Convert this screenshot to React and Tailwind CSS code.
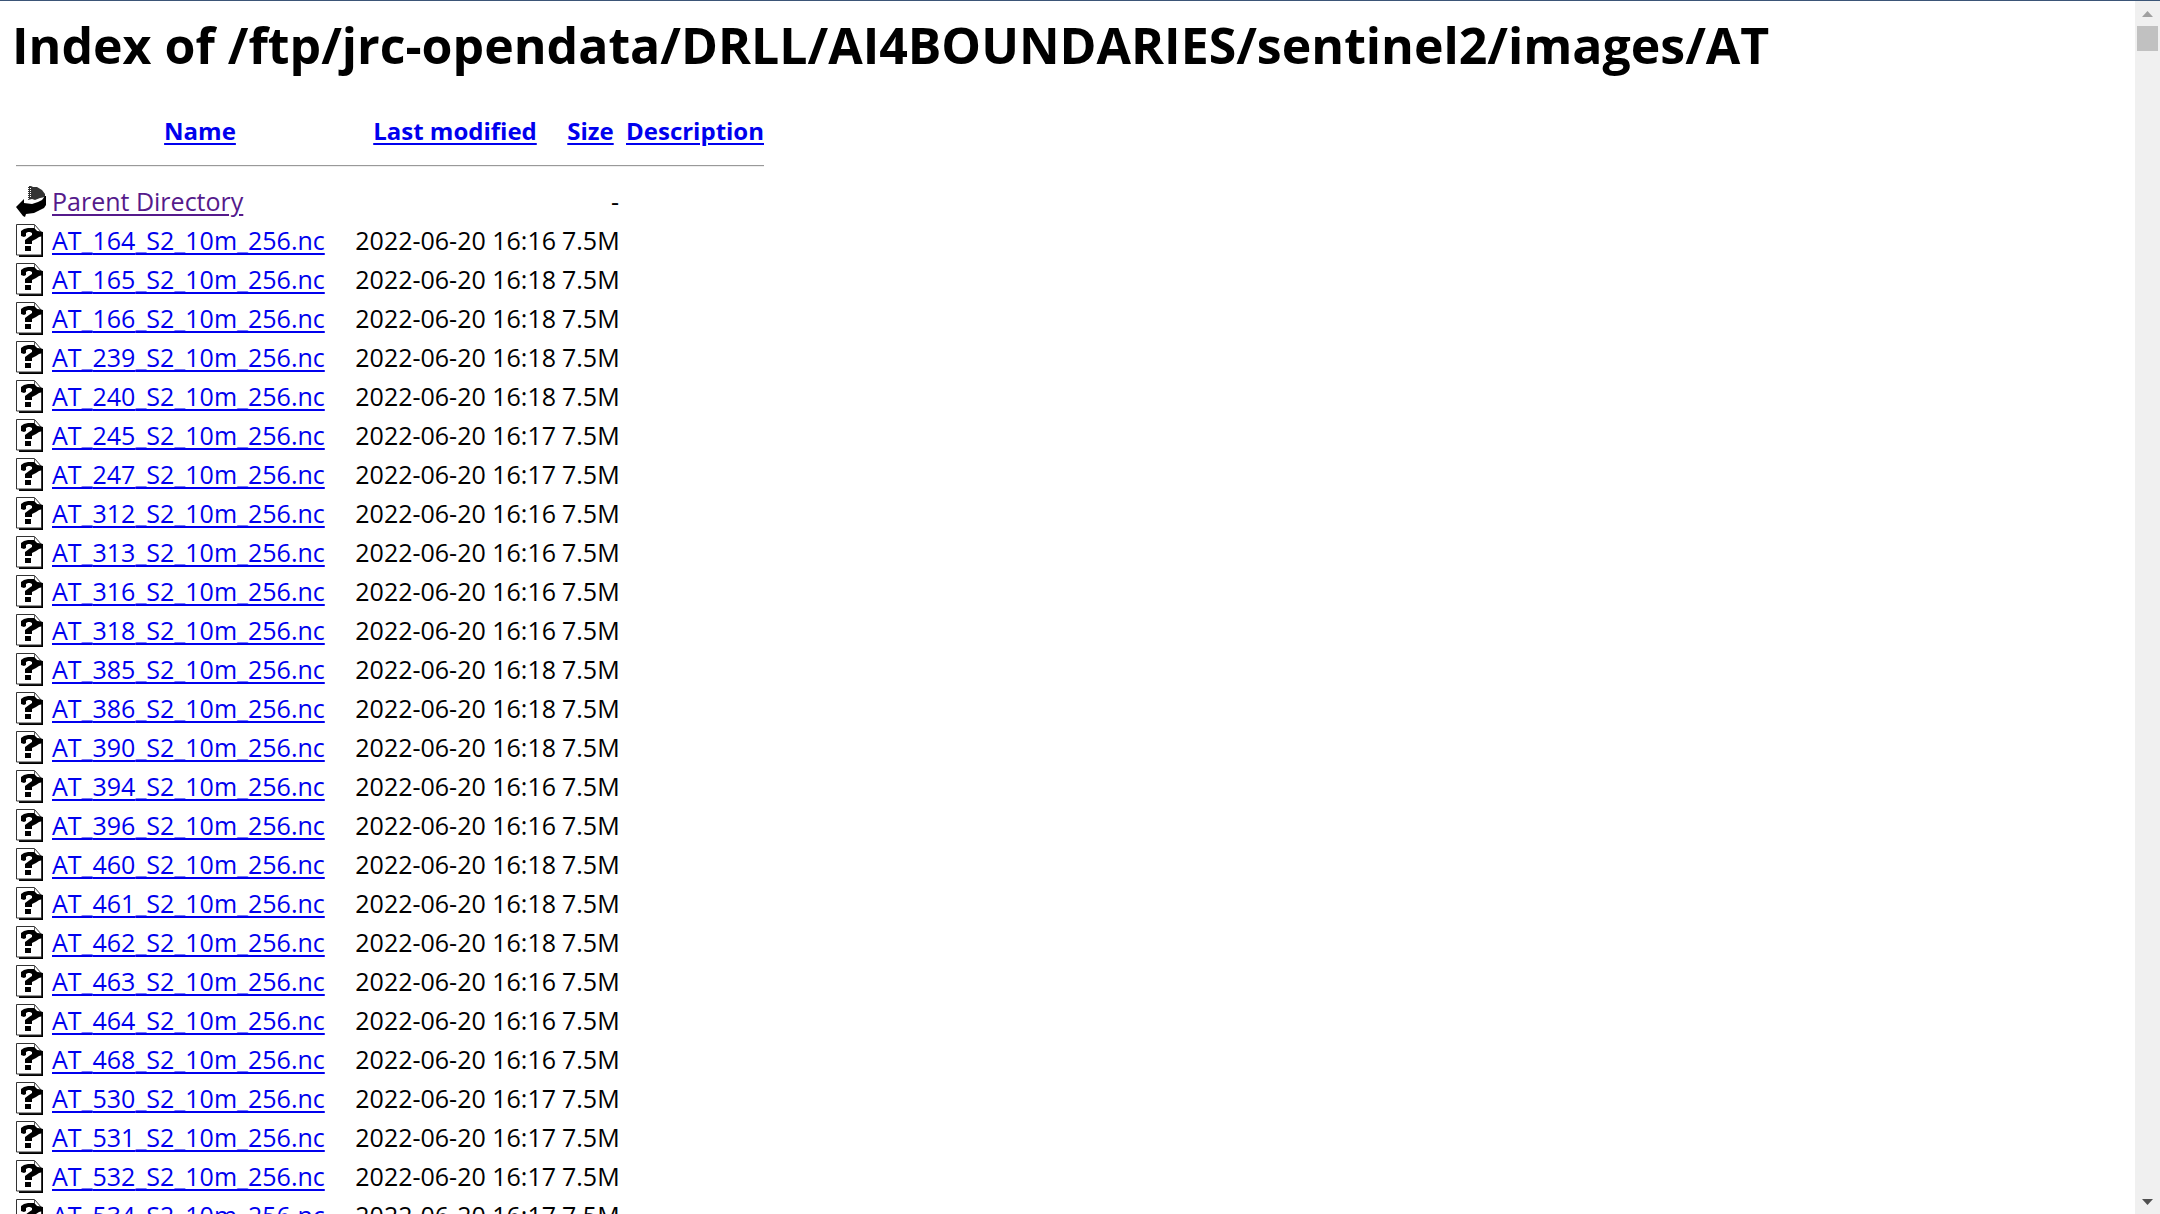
import React from 'react';

const files = [
  ['164', '16:16'],
  ['165', '16:18'],
  ['166', '16:18'],
  ['239', '16:18'],
  ['240', '16:18'],
  ['245', '16:17'],
  ['247', '16:17'],
  ['312', '16:16'],
  ['313', '16:16'],
  ['316', '16:16'],
  ['318', '16:16'],
  ['385', '16:18'],
  ['386', '16:18'],
  ['390', '16:18'],
  ['394', '16:16'],
  ['396', '16:16'],
  ['460', '16:18'],
  ['461', '16:18'],
  ['462', '16:18'],
  ['463', '16:16'],
  ['464', '16:16'],
  ['468', '16:16'],
  ['530', '16:17'],
  ['531', '16:17'],
  ['532', '16:17'],
  ['534', '16:17'],
];

const BackIcon = () => (
  <svg className="block h-[33px] w-[30px]" viewBox="0 0 30 33" aria-hidden="true">
    <path d="M12 1h3l2 1h4l5 3 3 4v3l-5 1-5 2-3-1-4 1z" fill="#333" />
    <path d="M12.500 1v13M14.500 3v10" stroke="#fff" strokeWidth="1" strokeDasharray="1 1" />
    <path d="M30 11v9l-2 3-4 2-6 3-8 1-1 3-2-1-7-9 8-8v4l8 1 6-2 4-2 3-4z" fill="#000" />
  </svg>
);

const UnknownIcon = () => (
  <svg className="block h-[33px] w-[30px]" viewBox="0 0 30 33" aria-hidden="true">
    <path d="M3 32h23V9" fill="none" stroke="#000" strokeWidth="2" />
    <path d="M.5.5h18l7 8V31H.5z" fill="#fff" stroke="#333" />
    <path d="M18.500 1v4l3 3h4" fill="none" stroke="#555" />
    <path d="M5 7l3-2 4-1h6l3 3 6 1v4l-4 1-3 2-4 2v3H9v-4l4-3 3-2V9l-2-1h-2l-2 1v3l-2 1-3-1z" fill="#000" />
    <path d="M9 22h6v5H9z" fill="#000" />
  </svg>
);

const HeaderLink = ({ children }) => (
  <a href="#sort" className="text-2xl leading-[33px] text-[#0000ee] underline decoration-2 underline-offset-3">
    {children}
  </a>
);

const Scrollbar = () => (
  <div className="flex w-[25px] shrink-0 flex-col items-center justify-between bg-[#f0f0f0] pt-[10px] pb-[9px]" aria-hidden="true">
    <div className="flex flex-col items-center gap-[9px]">
      <svg className="block h-[6px] w-[11px]" viewBox="0 0 11 6">
        <path d="M5.500 0L11 6H0z" fill="#a0a0a0" />
      </svg>
      <div className="h-[25px] w-[21px] bg-[#c1c1c1]" />
    </div>
    <svg className="block h-[6px] w-[11px]" viewBox="0 0 11 6">
      <path d="M0 0h11L5.500 6z" fill="#505050" />
    </svg>
  </div>
);

const App = () => {
  return (
    <div className="flex h-screen overflow-hidden border-t border-[#3b5577] bg-white font-['Open_Sans','Noto_Sans',sans-serif] text-[25px] leading-[33px] text-black">
      <main className="min-w-0 flex-1 overflow-hidden px-3">
        <h1 className="pt-[11px] text-[50px] leading-[66px] font-bold whitespace-nowrap">
          Index of /ftp/jrc-opendata/DRLL/AI4BOUNDARIES/sentinel2/images/AT
        </h1>

        <table className="mt-9 ml-1 w-[748px] table-fixed border-collapse whitespace-nowrap">
          <colgroup>
            <col className="w-9" />
            <col className="w-[296px]" />
            <col className="w-[214px]" />
            <col className="w-[61px]" />
            <col className="w-[141px]" />
          </colgroup>
          <thead>
            <tr>
              <th className="p-0" />
              <th className="p-0"><HeaderLink>Name</HeaderLink></th>
              <th className="p-0"><HeaderLink>Last modified</HeaderLink></th>
              <th className="p-0 pr-1"><HeaderLink>Size</HeaderLink></th>
              <th className="p-0 text-right"><HeaderLink>Description</HeaderLink></th>
            </tr>
            <tr>
              <th colSpan="5" className="p-0 pt-[18px] pb-[15px]">
                <hr className="h-[2px] border-t border-b border-t-[#999] border-b-[#eee]" />
              </th>
            </tr>
          </thead>
          <tbody>
            <tr className="h-[39px]">
              <td className="p-0"><BackIcon /></td>
              <td className="p-0">
                <a href="#parent" className="text-[#551a8b] underline decoration-2 underline-offset-3">Parent Directory</a>
              </td>
              <td className="p-0" />
              <td className="p-0 pr-1 text-right">-</td>
              <td className="p-0" />
            </tr>
            {files.map(([id, time]) => (
              <tr key={id} className="h-[39px]">
                <td className="p-0"><UnknownIcon /></td>
                <td className="p-0">
                  <a href={`#AT_${id}`} className="text-[#0000ee] underline decoration-2 underline-offset-3">
                    AT_{id}_S2_10m_256.nc
                  </a>
                </td>
                <td className="p-0 pr-[6px] text-right">2022-06-20 {time}</td>
                <td className="p-0 pr-1 text-right">7.5M</td>
                <td className="p-0" />
              </tr>
            ))}
          </tbody>
        </table>
      </main>
      <Scrollbar />
    </div>
  );
};

export default App;
